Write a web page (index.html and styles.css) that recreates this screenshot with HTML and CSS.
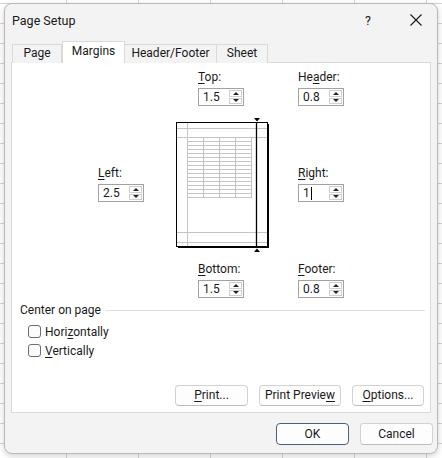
FILE: index.html
```html
<!DOCTYPE html>
<html>
<head>
<meta charset="utf-8">
<link rel="stylesheet" href="styles.css">
</head>
<body>
<div class="dialog">
  <div class="titlebar">
    <span class="title">Page Setup</span>
    <span class="help">?</span>
    <span class="close"><svg width="12" height="12" viewBox="0 0 12 12"><path d="M0.5 0.5 L11.5 11.5 M11.5 0.5 L0.5 11.5" stroke="#1a1a1a" stroke-width="1.1" fill="none"/></svg></span>
  </div>
  <div class="tabs">
    <div class="tab t-page">Page</div>
    <div class="tab active t-margins">Margins</div>
    <div class="tab t-hf">Header/Footer</div>
    <div class="tab t-sheet">Sheet</div>
  </div>
  <div class="panel">
    <div class="margins">
      <div class="field f-top">
        <div class="lbl"><u>T</u>op:</div>
        <div class="spin"><span class="val">1.5</span><span class="arrows"><span class="up"></span><span class="dn"></span></span></div>
      </div>
      <div class="field f-header">
        <div class="lbl">He<u>a</u>der:</div>
        <div class="spin"><span class="val">0.8</span><span class="arrows"><span class="up"></span><span class="dn"></span></span></div>
      </div>
      <div class="field f-left">
        <div class="lbl"><u>L</u>eft:</div>
        <div class="spin"><span class="val">2.5</span><span class="arrows"><span class="up"></span><span class="dn"></span></span></div>
      </div>
      <svg class="preview" width="100" height="140" viewBox="0 0 100 140">
        <rect x="6" y="10" width="91" height="124" fill="#000"/>
        <rect x="4.5" y="8.5" width="91" height="124" fill="#fff" stroke="#000" stroke-width="1"/>
        <g stroke="#c4c4c4" stroke-width="1">
          <path d="M15.5 9 V132 M5 14.5 H95 M5 23.5 H95 M5 118.5 H95 M5 128.5 H95"/>
          <path d="M15.5 27.5 H79 M15.5 31.5 H79 M15.5 35.5 H79 M15.5 39.5 H79 M15.5 43.5 H79 M15.5 47.5 H79 M15.5 51.5 H79 M15.5 55.5 H79 M15.5 59.5 H79 M15.5 63.5 H79 M15.5 67.5 H79 M15.5 71.5 H79 M15.5 75.5 H79 M15.5 79.5 H79 M15.5 83.5 H79.5"/>
          <path d="M31.5 23.5 V83.5 M47.5 23.5 V83.5 M63.5 23.5 V83.5 M79.5 23.5 V84"/>
        </g>
        <path d="M84.5 8 V133" stroke="#000" stroke-width="1.3"/>
        <path d="M82 4 H88 L85 7.5 Z M82 138 H88 L85 134.5 Z" fill="#000"/>
      </svg>
      <div class="field f-right">
        <div class="lbl"><u>R</u>ight:</div>
        <div class="spin"><span class="val">1<span class="caret"></span></span><span class="arrows"><span class="up"></span><span class="dn"></span></span></div>
      </div>
      <div class="field f-bottom">
        <div class="lbl"><u>B</u>ottom:</div>
        <div class="spin"><span class="val">1.5</span><span class="arrows"><span class="up"></span><span class="dn"></span></span></div>
      </div>
      <div class="field f-footer">
        <div class="lbl"><u>F</u>ooter:</div>
        <div class="spin"><span class="val">0.8</span><span class="arrows"><span class="up"></span><span class="dn"></span></span></div>
      </div>
    </div>
    <div class="group">
      <div class="group-head"><span class="group-title">Center on page</span><span class="group-line"></span></div>
      <label class="check"><span class="box"></span><span>Hori<u>z</u>ontally</span></label>
      <label class="check"><span class="box"></span><span><u>V</u>ertically</span></label>
    </div>
    <div class="btnrow">
      <div class="btn b-print"><u>P</u>rint...</div>
      <div class="btn b-preview">Print Previe<u>w</u></div>
      <div class="btn b-options"><u>O</u>ptions...</div>
    </div>
  </div>
  <div class="footer">
    <div class="btn b-ok default">OK</div>
    <div class="btn b-cancel">Cancel</div>
  </div>
</div>
</body>
</html>
```

FILE: styles.css
```css
* { box-sizing: border-box; }
html, body { margin: 0; padding: 0; }
body {
  width: 442px;
  height: 458px;
  overflow: hidden;
  font-family: Roboto, "Noto Sans", sans-serif;
  font-size: 12px;
  color: #1a1a1a;
  background-color: #fff;
  background-image:
    repeating-linear-gradient(90deg, transparent 0 66px, #d4d4d4 66px 67px, transparent 67px 72px),
    repeating-linear-gradient(180deg, transparent 0 3px, #d4d4d4 3px 4px, transparent 4px 20px);
}
.dialog {
  margin: 3px 0 0 4px;
  width: 434px;
  height: 451px;
  border: 1px solid #b9b9b9;
  border-radius: 8px;
  background: #f3f3f3;
  box-shadow: 0 2px 6px rgba(0,0,0,0.18);
  overflow: hidden;
}
.titlebar {
  height: 32px;
  display: flex;
  align-items: center;
  padding-left: 7px;
}
.title { font-size: 12.5px; flex: 1; }
.help { width: 14px; text-align: center; margin-right: 35px; font-size: 12.5px; }
.close { width: 12px; height: 12px; margin-right: 15px; display: flex; }
.tabs {
  height: 27px;
  display: flex;
  align-items: flex-end;
  padding-left: 7px;
  margin-bottom: -1px;
}
.tab {
  height: 19px;
  line-height: 17px;
  text-align: center;
  border: 1px solid #dadada;
  border-bottom: none;
  border-left: none;
  background: #f3f3f3;
}
.t-page { width: 50px; border-left: 1px solid #dadada; }
.t-margins { width: 63px; }
.t-hf { width: 92px; }
.t-sheet { width: 51px; }
.tab.active {
  height: 22px;
  line-height: 19px;
  background: #fff;
  border-left: 1px solid #dadada;
  position: relative;
  z-index: 1;
}
.panel {
  margin-left: 6px;
  width: 420px;
  height: 351px;
  border: 1px solid #d9d9d9;
  background: #fff;
}
.margins {
  display: grid;
  grid-template-columns: 74px 126px 100px;
  padding-top: 7px;
  padding-left: 86px;
}
.field { display: flex; flex-direction: column; }
.lbl { height: 15px; line-height: 15px; margin-bottom: 3px; }
.f-top { grid-column: 2; grid-row: 1; margin-left: 26px; }
.f-header { grid-column: 3; grid-row: 1; }
.f-left { grid-column: 1; grid-row: 2; align-self: center; margin-top: 8px; }
.preview { grid-column: 2; grid-row: 2; margin-top: 8px; display: block; }
.f-right { grid-column: 3; grid-row: 2; align-self: center; margin-top: 8px; }
.f-bottom { grid-column: 2; grid-row: 3; margin-left: 26px; margin-top: 8px; }
.f-footer { grid-column: 3; grid-row: 3; margin-top: 8px; }
.spin {
  display: flex;
  width: 46px;
  height: 18px;
  border: 1px solid #a2a2a2;
  background: #fff;
}
.val { flex: 1; padding-left: 4px; line-height: 16px; display: flex; align-items: center; }
.caret { display: inline-block; width: 1px; height: 13px; background: #000; margin-left: 1px; }
.arrows {
  width: 14px;
  display: flex;
  flex-direction: column;
  padding: 1px 1px 1px 0;
  gap: 1px;
}
.up, .dn {
  flex: 1;
  border: 1px solid #cfcfcf;
  display: flex;
  align-items: center;
  justify-content: center;
}
.up::after, .dn::after {
  content: "";
  border-left: 3px solid transparent;
  border-right: 3px solid transparent;
}
.up::after { border-bottom: 3px solid #222; }
.dn::after { border-top: 3px solid #222; }
.group { padding-left: 8px; margin-top: 5px; }
.group-head { display: flex; align-items: center; height: 15px; }
.group-title { line-height: 15px; margin-right: 5px; }
.group-line { flex: 1; height: 1px; background: #dcdcdc; margin-right: 5px; }
.check {
  display: flex;
  align-items: center;
  height: 19px;
  padding-left: 8px;
}
.group-head + .check { margin-top: 4px; }
.box {
  width: 13px;
  height: 13px;
  border: 1px solid #6e6e6e;
  border-radius: 3px;
  margin-right: 4px;
  background: #fbfbfb;
}
.btnrow {
  display: flex;
  justify-content: flex-end;
  gap: 11px;
  padding-right: 6px;
  margin-top: 25px;
}
.btn {
  height: 21px;
  line-height: 19px;
  text-align: center;
  border: 1px solid #d2d2d2;
  border-bottom-color: #bdbdbd;
  border-radius: 4px;
  background: #fdfdfd;
}
.b-print { width: 73px; }
.b-preview { width: 82px; }
.b-options { width: 72px; }
.footer {
  display: flex;
  justify-content: flex-end;
  gap: 11px;
  padding-right: 4px;
  margin-top: 10px;
}
.b-ok, .b-cancel { width: 73px; height: 22px; line-height: 20px; }
.btn.default { border-color: #48617f; }
u { text-decoration-thickness: 1px; text-underline-offset: 2px; }
```
